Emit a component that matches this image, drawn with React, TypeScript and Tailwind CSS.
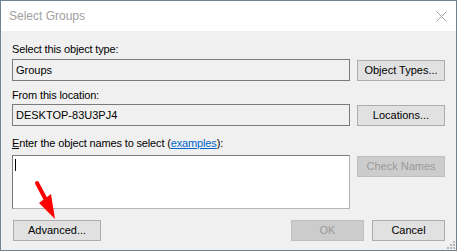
import React from 'react'

// Win32 "Select Groups" picker, inactive-window look

const FONT = "font-['Liberation_Sans',Arial,sans-serif]"

function Btn({
  label,
  width,
  disabled,
  className = '',
}: {
  label: string
  width: string
  disabled?: boolean
  className?: string
}) {
  return (
    <button
      type="button"
      disabled={disabled}
      className={`flex h-[21px] shrink-0 items-center justify-center border text-[11px] leading-[13px] ${width} ${
        disabled
          ? 'border-[#bfbfbf] bg-[#cccccc] text-[#9a9a9a]'
          : 'border-[#adadad] bg-[#e1e1e1] text-black'
      } ${className}`}
    >
      {label}
    </button>
  )
}

function ReadOnlyBox({ value }: { value: string }) {
  return (
    <div className="flex h-[22px] flex-1 items-center border border-[#7a7a7a] bg-[#f0f0f0] pl-[3px] text-[11px] leading-[13px] text-black">
      {value}
    </div>
  )
}

function Arrow() {
  return (
    <svg className="pointer-events-none absolute left-[30px] top-[178px]" width="30" height="42" viewBox="0 0 30 42">
      <line x1="6" y1="4" x2="15" y2="21" stroke="#ff0000" strokeWidth="4" strokeLinecap="round" />
      <polygon points="8,24 20,15 24,40" fill="#ff0000" />
    </svg>
  )
}

export default function App() {
  return (
    <div className={`relative flex h-[251px] w-[457px] flex-col border border-[#6f8296] bg-[#f0f0f0] ${FONT}`}>
      <div className="flex h-[30px] shrink-0 items-center justify-between bg-white pl-2 pr-[9px]">
        <span className="text-[12px] leading-[14px] text-[#a0a0a0]">Select Groups</span>
        <svg width="11" height="11" viewBox="0 0 11 11">
          <path d="M0.5 0.5 L10.5 10.5 M10.5 0.5 L0.5 10.5" stroke="#a5a5a5" strokeWidth="1" />
        </svg>
      </div>

      <div className="flex flex-1 flex-col px-[11px] text-[11px] leading-[13px] text-black">
        <div className="mt-[12px] tracking-[-0.15px]">Select this object type:</div>
        <div className="mt-[3px] flex items-start gap-[7px]">
          <ReadOnlyBox value="Groups" />
          <Btn label="Object Types..." width="w-[88px]" className="mt-px" />
        </div>

        <div className="mt-[8px] tracking-[-0.15px]">From this location:</div>
        <div className="mt-[2px] flex items-start gap-[7px]">
          <ReadOnlyBox value="DESKTOP-83U3PJ4" />
          <Btn label="Locations..." width="w-[88px]" className="mt-px" />
        </div>

        <div className="mt-[11px] tracking-[-0.15px]">
          <span className="underline underline-offset-1">E</span>nter the object names to select (
          <span className="text-[#0066cc] underline underline-offset-1">examples</span>):
        </div>
        <div className="mt-[5px] flex items-start gap-[7px]">
          <div className="h-[54px] flex-1 border border-[#7a7a7a] border-b-[#b4b4b4] border-r-[#b4b4b4] bg-white pl-[2px] pt-[3px]">
            <div className="h-[12px] w-px bg-black" />
          </div>
          <Btn label="Check Names" width="w-[88px]" disabled className="mt-px" />
        </div>

        <div className="mt-[11px] flex items-start">
          <Btn label="Advanced..." width="w-[88px]" className="ml-px" />
          <div className="flex-1" />
          <Btn label="OK" width="w-[73px]" disabled />
          <Btn label="Cancel" width="w-[73px]" className="ml-[8px]" />
        </div>
      </div>

      <Arrow />

      <svg className="pointer-events-none absolute bottom-[1px] right-[1px]" width="8" height="8" viewBox="0 0 8 8">
        <rect x="6" y="0" width="2" height="2" fill="#b8b8b8" />
        <rect x="3" y="3" width="2" height="2" fill="#b8b8b8" />
        <rect x="6" y="3" width="2" height="2" fill="#b8b8b8" />
        <rect x="0" y="6" width="2" height="2" fill="#b8b8b8" />
        <rect x="3" y="6" width="2" height="2" fill="#b8b8b8" />
        <rect x="6" y="6" width="2" height="2" fill="#b8b8b8" />
      </svg>
    </div>
  )
}
